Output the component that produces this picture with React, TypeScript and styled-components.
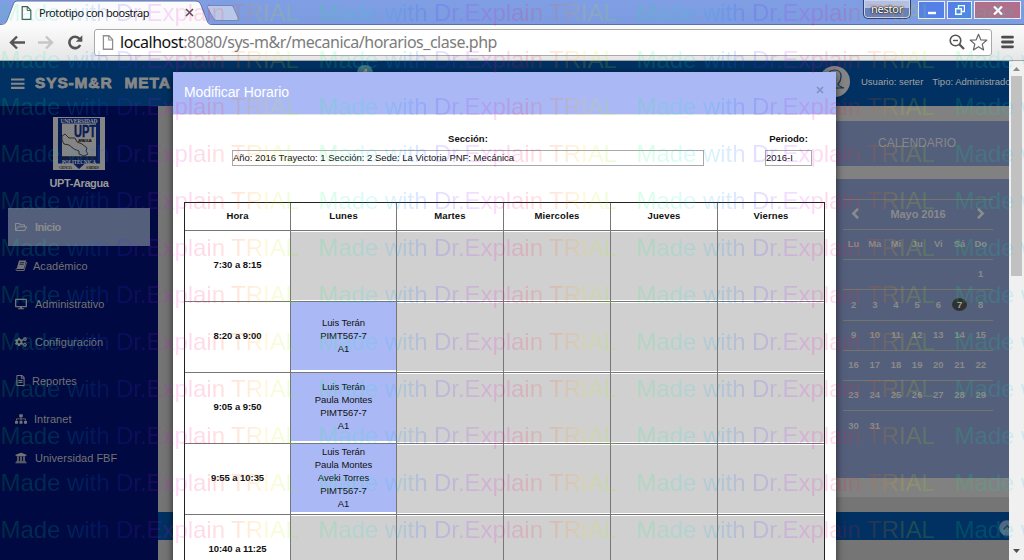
import React from "react";
import styled, { createGlobalStyle, css } from "styled-components";
import {
  FaRegFolderOpen,
  FaDesktop,
  FaCogs,
  FaRegFileAlt,
  FaSitemap,
  FaUniversity,
} from "react-icons/fa";

const Global = createGlobalStyle`
  * { box-sizing: border-box; }
  html, body { margin: 0; padding: 0; overflow: hidden; }
  body { font-family: "Liberation Sans", Arial, sans-serif; }
  svg { display: block; flex: none; }
`;

const Window = styled.div`
  position: relative;
  width: 1024px;
  height: 560px;
  display: flex;
  flex-direction: column;
  overflow: hidden;
`;

/* ---------- browser chrome ---------- */

const TabStrip = styled.header`
  height: 25px;
  flex: none;
  display: flex;
  align-items: flex-start;
  background: linear-gradient(#7f9ee3, #7d9be0);
  border-bottom: 1px solid #5b6fa8;
`;

const Tab = styled.div`
  position: relative;
  width: 212px;
  height: 25px;
  display: flex;
  align-items: center;
  padding-left: 21px;
`;

const TabShape = styled.svg`
  position: absolute;
  left: 0;
  top: 0;
`;

const TabTitle = styled.span`
  position: relative;
  margin-left: 7px;
  width: 146px;
  font: 11px/14px "Noto Sans", sans-serif;
  letter-spacing: -0.43px;
  color: #111;
  white-space: nowrap;
`;

const Raised = styled.svg`
  position: relative;
`;

const NewTab = styled.svg`
  margin: 5px 0 0 -6px;
`;

const WindowButtons = styled.div`
  margin-left: auto;
  display: flex;
  padding-right: 2px;
`;

const Profile = styled.div`
  width: 48px;
  height: 19px;
  margin-right: 6px;
  border: 1px solid #33416e;
  border-top: 0;
  border-radius: 0 0 5px 5px;
  box-shadow: inset 0 0 0 1px #c9d3ee;
  background: linear-gradient(#b3c0e2 0 8px, #6a80b9 8px 100%);
  color: #fff;
  font: 11px/18px "Noto Sans", sans-serif;
  letter-spacing: -0.2px;
  text-align: center;
  text-shadow: 0 0 2px #222, 0 0 2px #222, 0 0 1px #222;
`;

const WinButton = styled.div<{ $w: number; $tone: string }>`
  width: ${(p) => p.$w}px;
  height: 18px;
  margin: 1px 1px 0 1px;
  border: 1px solid #e9edf8;
  background: ${(p) => p.$tone};
  display: flex;
  align-items: center;
  justify-content: center;
`;

const Toolbar = styled.div`
  height: 36px;
  flex: none;
  display: flex;
  align-items: center;
  padding: 0 9px 1px 9px;
  background: linear-gradient(#fbfbfb, #e6e6e6);
  border-bottom: 1px solid #a5a5a5;
`;

const NavIcons = styled.div`
  display: flex;
  gap: 13px;
  width: 85px;
`;

const Omnibox = styled.div`
  width: 898px;
  height: 27px;
  display: flex;
  align-items: center;
  padding: 0 3px 0 7px;
  background: #fff;
  border: 1px solid #a9a9a9;
  border-radius: 3px;
`;

const Url = styled.div`
  flex: 1;
  margin-left: 6px;
  font: 16px/24px "Noto Sans", sans-serif;
  letter-spacing: -0.48px;
  color: #7c7c7c;
  white-space: nowrap;
  b {
    font-weight: 400;
    color: #111;
  }
`;

const Star = styled.svg`
  margin-left: 4px;
`;

const MenuIcon = styled.svg`
  margin-left: 9px;
`;

/* ---------- page ---------- */

const Viewport = styled.div`
  flex: 1;
  display: flex;
  min-height: 0;
  position: relative;
`;

const Page = styled.div`
  width: 1009px;
  display: flex;
  flex-direction: column;
  overflow: hidden;
`;

const PageHeader = styled.div`
  position: relative;
  height: 45px;
  flex: none;
  display: flex;
  align-items: center;
  padding-left: 11px;
  background: #003162;
  color: #878787;
`;

const Brand = styled.span`
  margin: -2px 0 0 10px;
  font-size: 15.5px;
  font-weight: 700;
  letter-spacing: 0.85px;
  word-spacing: 7px;
  -webkit-text-stroke: 0.8px #878787;
  white-space: nowrap;
`;

const Badge = styled.span`
  position: absolute;
  left: 357px;
  top: 4px;
  width: 16px;
  height: 16px;
  border-radius: 50%;
  background: #3f7480;
  color: #b09a90;
  font: 700 9px/15px "Liberation Sans", sans-serif;
  text-align: center;
`;

const Avatar = styled.svg`
  position: absolute;
  left: 819px;
  top: 5px;
`;

const UserInfo = styled.div`
  position: absolute;
  left: 861px;
  top: 14px;
  display: flex;
  gap: 9px;
  font-size: 9.5px;
  line-height: 13px;
  letter-spacing: 0;
  color: #a3a3a3;
  white-space: nowrap;
`;

const PageBody = styled.div`
  flex: 1;
  display: flex;
  min-height: 0;
`;

const Sidebar = styled.nav`
  width: 158px;
  flex: none;
  background: #000941;
  padding: 11px 8px 0;
`;

const Logo = styled.svg`
  margin: 0 auto;
`;

const SchoolName = styled.div`
  height: 38px;
  padding-top: 6px;
  font-size: 11px;
  line-height: 14px;
  font-weight: 700;
  letter-spacing: -0.4px;
  text-align: center;
  color: #999;
`;

const NavItem = styled.div<{ $active?: boolean; $shift?: number }>`
  height: 38.4px;
  width: 142px;
  display: flex;
  align-items: center;
  padding-left: 7px;
  font-size: 11px;
  letter-spacing: 0.02px;
  color: #737373;
  span {
    margin-left: ${(p) => 8 - (p.$shift || 0)}px;
    white-space: nowrap;
  }
  ${(p) =>
    p.$active &&
    css`
      background: #545f7c;
      color: #8c8c8c;
      font-weight: 700;
      letter-spacing: -0.5px;
    `}
`;

const Main = styled.main`
  flex: 1;
  display: flex;
  flex-direction: column;
  background: #757575;
`;

const RightColumn = styled.aside`
  height: 391px;
  width: 184px;
  align-self: flex-end;
  padding: 15px 0 0 10px;
  background: #818181;
`;

const PanelTitle = styled.div`
  height: 45px;
  background: #545f7c;
  color: #878787;
  font-size: 12px;
  line-height: 44px;
  letter-spacing: 0.02px;
  padding-left: 43px;
`;

const CalendarPanel = styled.div`
  margin-top: 13px;
  height: 299px;
  background: #545f7c;
  padding: 20px 16px 0 8px;
  color: #8a8a8a;
  font-weight: 700;
`;

const MonthBar = styled.div`
  height: 31px;
  border: 1px solid #74746f;
  border-width: 1px 0;
  display: flex;
  align-items: center;
  justify-content: space-between;
  padding: 0 8px 2px 8px;
  font-size: 11px;
  letter-spacing: -0.05px;
`;

const Week = styled.div<{ $tall?: boolean; $last?: boolean }>`
  height: ${(p) => (p.$tall ? 31 : 30)}px;
  padding-bottom: 2px;
  display: grid;
  grid-template-columns: repeat(7, 21.2px);
  align-items: center;
  text-align: center;
  font-size: 9.5px;
  border-bottom: ${(p) => (p.$last ? 0 : 1)}px solid #74746f;
`;

const Day = styled.span<{ $today?: boolean }>`
  ${(p) =>
    p.$today &&
    css`
      justify-self: center;
      width: 15px;
      height: 13px;
      line-height: 13px;
      border-radius: 50%;
      background: #303030;
      color: #a0a0a0;
    `}
`;

const FooterBar = styled.div`
  margin-top: 15px;
  height: 28px;
  background: #003162;
  display: flex;
  justify-content: flex-end;
  align-items: center;
`;

const UpButton = styled.svg`
  margin: 3px -6px 0 0;
`;

const Scrollbar = styled.div`
  width: 15px;
  background: #f0f0f0;
  display: flex;
  flex-direction: column;
  align-items: center;
  padding: 6px 0 7px 0;
`;

const Thumb = styled.div`
  width: 11px;
  height: 200px;
  margin: 5px 0 auto;
  background: #c1c1c1;
`;

/* ---------- modal ---------- */

const Modal = styled.section`
  position: absolute;
  left: 173px;
  top: 11px;
  width: 663px;
  height: 520px;
  background: #fff;
  box-shadow: 0 2px 8px rgba(0, 0, 0, 0.65);
  color: #111;
`;

const ModalHeader = styled.div`
  height: 43px;
  display: flex;
  align-items: center;
  justify-content: space-between;
  padding: 0 12px 3px 11px;
  background: #aab9f5;
  border-bottom: 1px solid #e5e5e5;
  color: #fff;
  font-size: 14px;
  letter-spacing: -0.1px;
`;

const CloseIcon = styled.svg`
  margin-bottom: 4px;
`;

const Fields = styled.div`
  display: flex;
  justify-content: space-between;
  padding: 17px 24px 0 59px;
  height: 87px;
`;

const Field = styled.label<{ $w: number }>`
  width: ${(p) => p.$w}px;
  display: flex;
  flex-direction: column;
  font-size: 9.5px;
  font-weight: 700;
  line-height: 13px;
  letter-spacing: 0.02px;
  text-align: center;
`;

const Input = styled.div`
  margin-top: 5px;
  height: 16px;
  border: 1px solid #a9a9a9;
  font-weight: 400;
  font-size: 9.5px;
  line-height: 13px;
  letter-spacing: -0.02px;
  text-align: left;
  white-space: nowrap;
`;

const Schedule = styled.div`
  width: 641px;
  margin-left: 11px;
  display: grid;
  grid-template-columns: 106px 106px 107px 107px 107px 106px;
  grid-template-rows: 28px repeat(5, 71px);
  border: 1px solid #222;
  font-size: 9.5px;
`;

const Cell = styled.div<{ $last?: boolean }>`
  border-right: ${(p) => (p.$last ? 0 : 1)}px solid #777;
  border-bottom: 1px solid #777;
  background: #fff;
  display: flex;
  align-items: center;
  justify-content: center;
`;

const HeadCell = styled(Cell)`
  font-weight: 700;
  letter-spacing: 0.12px;
  padding-bottom: 3px;
`;

const HourCell = styled(HeadCell)`
  padding-bottom: 4px;
  letter-spacing: -0.06px;
`;

const SlotCell = styled(Cell)`
  align-items: flex-start;
`;

const Slot = styled.div<{ $busy?: boolean }>`
  width: 100%;
  height: 68px;
  margin-top: ${(p) => (p.$busy ? 0 : 1)}px;
  padding-bottom: 2px;
  background: ${(p) => (p.$busy ? "#aab9f5" : "#d0d0d0")};
  display: flex;
  flex-direction: column;
  align-items: center;
  justify-content: center;
  line-height: 13px;
  letter-spacing: -0.05px;
`;

/* ---------- watermark ---------- */

const WatermarkLayer = styled.div`
  position: absolute;
  inset: -1px 0 0 0;
  display: grid;
  grid-template-columns: repeat(4, 318px);
  grid-auto-rows: 47px;
  overflow: hidden;
  pointer-events: none;
  opacity: 0.14;
`;

const Mark = styled.span`
  padding-left: 0.5px;
  font-size: 24px;
  line-height: 27px;
  letter-spacing: -0.05px;
  white-space: nowrap;
  color: transparent;
  background: linear-gradient(
    90deg,
    #00ff60 0px,
    #00e8d8 50px,
    #0090ff 85px,
    #3030ff 115px,
    #9020ff 145px,
    #f000f0 170px,
    #ff0050 205px,
    #ff6000 240px,
    #ffe000 268px,
    #80ff00 295px,
    #00ff60 318px
  );
  background-clip: text;
  -webkit-background-clip: text;
`;

const BarsIcon = () => (
  <svg width="14" height="12" viewBox="0 0 14 12">
    <path d="M0 1.500h13.500M0 5.700h13.500M0 9.900h13.500" stroke="#878787" strokeWidth="2.100" />
  </svg>
);

const BookIcon = () => (
  <svg width="12" height="11" viewBox="0 0 12 11">
    <path d="M4 .5h7.2L8.800 9H1.600z" fill="currentColor" />
    <path d="M1.600 8.600 1 9.600c0 .6.4.9.9.9h7.200L11.600 2" fill="none" stroke="currentColor" strokeWidth=".9" />
    <path d="M5 2.600h4.200M4.500 4.300h4.200" stroke="#000941" strokeWidth=".7" />
  </svg>
);

const Chevron = ({ d }: { d: string }) => (
  <svg width="8" height="11" viewBox="0 0 8 11">
    <path d={d} fill="none" stroke="#8c8c8c" strokeWidth="2.500" />
  </svg>
);

const PageIcon = ({ w, h, c }: { w: number; h: number; c: string }) => (
  <Raised width={w} height={h} viewBox="0 0 10 14">
    <path d="M.7.7h5.200l3.400 3.600v9H.7z" fill="#fff" stroke={c} strokeWidth="1.200" />
    <path d="M5.700.9v3.700h3.500" fill="none" stroke={c} strokeWidth="1" />
  </Raised>
);

const SchoolLogo = () => (
  <Logo width="52" height="53" viewBox="0 0 52 53">
    <rect width="52" height="53" fill="#858585" />
    <path d="M5 1h42v45.500H32L26 52l-6-5.500H5z" fill="#0a1c55" />
    <path d="M9 6.500h34v33H9z" fill="#858585" />
    <g fontFamily="Liberation Serif" fontWeight="700" fill="#999">
      <text x="7.500" y="5.600" fontSize="5.500" textLength="37">UNIVERSIDAD</text>
      <text x="9" y="47" fontSize="6" textLength="34" lengthAdjust="spacingAndGlyphs">POLITÉCNICA</text>
    </g>
    <text x="21" y="19.500" fontFamily="Liberation Sans" fontWeight="700" fontSize="16" fill="#0a1c55" stroke="#0a1c55" strokeWidth=".5" textLength="22" lengthAdjust="spacingAndGlyphs">UPT</text>
    <text x="25" y="24.500" fontFamily="Liberation Sans" fontWeight="700" fontSize="4" fill="#111" textLength="14">ARAGUA</text>
    <path d="M9 19l3-2 2 2 2 2 6 0 2 4 5 2 5 4-1 3 2 3-4 2-5-2 0-3-5-2-5-4-5-1-2-4z" fill="none" stroke="#222" strokeWidth=".9" />
    <path d="M9 40.500h34" stroke="#1c1c24" strokeWidth="2.400" strokeDasharray="1.600 .5" />
    <g fontFamily="Liberation Serif" fontWeight="700" fontSize="3.500" fill="#222">
      <text x="6" y="52" textLength="13">CIENCIA</text>
      <text x="33" y="52" textLength="13">SABERES</text>
    </g>
  </Logo>
);

const weeks: string[][] = [
  ["", "", "", "", "", "", "1"],
  ["2", "3", "4", "5", "6", "7", "8"],
  ["9", "10", "11", "12", "13", "14", "15"],
  ["16", "17", "18", "19", "20", "21", "22"],
  ["23", "24", "25", "26", "27", "28", "29"],
  ["30", "31", "", "", "", "", ""],
];

const days = ["Hora", "Lunes", "Martes", "Miercoles", "Jueves", "Viernes"];

const hours: { time: string; monday?: string[] }[] = [
  { time: "7:30 a 8:15" },
  { time: "8:20 a 9:00", monday: ["Luis Terán", "PIMT567-7", "A1"] },
  { time: "9:05 a 9:50", monday: ["Luis Terán", "Paula Montes", "PIMT567-7", "A1"] },
  { time: "9:55 a 10:35", monday: ["Luis Terán", "Paula Montes", "Aveki Torres", "PIMT567-7", "A1"] },
  { time: "10:40 a 11:25" },
];

const Chrome = () => (
  <>
    <TabStrip>
      <Tab>
        <TabShape width="212" height="25" viewBox="0 0 212 25">
          <path d="M0 25v-1c4 0 6-1 7-4l6-15c1-3 2-4 5-4h177c3 0 5 1 6 4l6 15c1 3 2 4 5 4v1z" fill="#fbfbfb" />
          <path d="M0 24.500c4 0 6-1 7-4l6-15.500c1-3 2-4 5-4h177c3 0 5 1 6 4l6 15.500c1 3 2 4 5 4" fill="none" stroke="#5b6fa8" />
        </TabShape>
        <PageIcon w={11} h={14} c="#4b5a50" />
        <TabTitle>Prototipo con boostrap</TabTitle>
        <Raised width="9" height="9" viewBox="0 0 9 9">
          <path d="M1 1l7 7M8 1L1 8" stroke="#555" strokeWidth="1.600" />
        </Raised>
      </Tab>
      <NewTab width="34" height="16" viewBox="0 0 34 16">
        <path d="M3 .5h21c2 0 3 .5 4 3l4 9c.6 2 0 3-2 3H11c-2 0-3-1-4-3L1.500 3C1 1.500 1.500.5 3 .5z" fill="#b9c8e9" stroke="#7587b8" />
      </NewTab>
      <WindowButtons>
        <Profile>nestor</Profile>
        <WinButton $w={27} $tone="#5580e8">
          <svg width="10" height="10"><path d="M1 8h8" stroke="#fff" strokeWidth="2.400" /></svg>
        </WinButton>
        <WinButton $w={25} $tone="#5580e8">
          <svg width="10" height="10" fill="none" stroke="#fff">
            <path d="M3.500 3V.5h6v6H7" strokeWidth="1.300" />
            <path d="M.7 3.700h5.600v5.600H.7z" strokeWidth="1.400" />
          </svg>
        </WinButton>
        <WinButton $w={47} $tone="#b0708c">
          <svg width="10" height="9"><path d="M1 .5l8 8M9 .5l-8 8" stroke="#fff" strokeWidth="2.200" /></svg>
        </WinButton>
      </WindowButtons>
    </TabStrip>
    <Toolbar>
      <NavIcons>
        <svg width="16" height="15" viewBox="0 0 16 15" fill="none" stroke="#555" strokeWidth="2.400">
          <path d="M1.500 7.500H16M8 1.500l-6 6 6 6" />
        </svg>
        <svg width="16" height="15" viewBox="0 0 16 15" fill="none" stroke="#c6c6c6" strokeWidth="2.400">
          <path d="M0 7.500h14.500M8 1.500l6 6-6 6" />
        </svg>
        <svg width="16" height="15" viewBox="0 0 16 15">
          <path d="M12.500 3.800A5.700 5.700 0 1 0 13.200 10" fill="none" stroke="#555" strokeWidth="2.600" />
          <path d="M15.300.3v6.500H8.800z" fill="#555" />
        </svg>
      </NavIcons>
      <Omnibox>
        <PageIcon w={12} h={15} c="#8f8f8f" />
        <Url><b>localhost</b>:8080/sys-m&amp;r/mecanica/horarios_clase.php</Url>
        <svg width="16" height="16" viewBox="0 0 16 16" fill="none" stroke="#555">
          <circle cx="6.500" cy="6.500" r="5.300" strokeWidth="1.600" />
          <path d="M4 6.500h5" strokeWidth="1.400" />
          <path d="M10.500 10.500l4.500 4.500" strokeWidth="2.300" />
        </svg>
        <Star width="19" height="18" viewBox="0 0 19 18">
          <path d="M9.500 1.300l2.300 5.500 5.900.4-4.500 3.900 1.400 5.800-5.100-3.200-5.100 3.200 1.400-5.800L1.300 7.200l5.900-.4z" fill="#fff" stroke="#666" strokeWidth="1.200" strokeLinejoin="round" />
        </Star>
      </Omnibox>
      <MenuIcon width="13" height="14" viewBox="0 0 13 14">
        <path d="M1.500 2.200h10M1.500 7h10M1.500 11.800h10" stroke="#4c4c4c" strokeWidth="2.800" strokeLinecap="round" />
      </MenuIcon>
    </Toolbar>
  </>
);

const CalendarCard = () => (
  <CalendarPanel>
    <MonthBar>
      <Chevron d="M7 .8L2.300 5.500 7 10.200" />
      <span>Mayo 2016</span>
      <Chevron d="M1 .8l4.700 4.700L1 10.200" />
    </MonthBar>
    <Week>
      {["Lu", "Ma", "Mi", "Ju", "Vi", "Sá", "Do"].map((d) => (
        <Day key={d}>{d}</Day>
      ))}
    </Week>
    {weeks.map((w, i) => (
      <Week key={i} $tall={i === 1} $last={i === 5}>
        {w.map((d, j) => (
          <Day key={j} $today={d === "7"}>{d}</Day>
        ))}
      </Week>
    ))}
  </CalendarPanel>
);

const ScheduleTable = () => (
  <Schedule>
    {days.map((d, i) => (
      <HeadCell key={d} $last={i === 5}>{d}</HeadCell>
    ))}
    {hours.map((h) => (
      <React.Fragment key={h.time}>
        <HourCell>{h.time}</HourCell>
        <SlotCell>
          <Slot $busy={!!h.monday}>
            {h.monday?.map((t) => <span key={t}>{t}</span>)}
          </Slot>
        </SlotCell>
        {[0, 1, 2, 3].map((n) => (
          <SlotCell key={n} $last={n === 3}>
            <Slot />
          </SlotCell>
        ))}
      </React.Fragment>
    ))}
  </Schedule>
);

export default function App() {
  return (
    <Window>
      <Global />
      <Chrome />
      <Viewport>
        <Page>
          <PageHeader>
            <BarsIcon />
            <Brand>SYS-M&amp;R META</Brand>
            <Badge>4</Badge>
            <Avatar width="31" height="31" viewBox="0 0 31 31">
              <circle cx="15.500" cy="15.500" r="15.500" fill="#858585" />
              <path d="M6 22c3-1.500 6-1.500 6-4-2-3-3-5-3-8 0-4 3-6 7-6s6 3 6 6-1 6-3 8c0 2 3 3 6 4H6z" fill="#858585" stroke="#12385f" strokeWidth="1.200" />
            </Avatar>
            <UserInfo>
              <span>Usuario: serter</span>
              <span>Tipo: Administrador</span>
            </UserInfo>
          </PageHeader>
          <PageBody>
            <Sidebar>
              <SchoolLogo />
              <SchoolName>UPT-Aragua</SchoolName>
              <NavItem $active><FaRegFolderOpen size={12} /><span>Inicio</span></NavItem>
              <NavItem $shift={2}><BookIcon /><span>Académico</span></NavItem>
              <NavItem><FaDesktop size={12} /><span>Administrativo</span></NavItem>
              <NavItem><FaCogs size={12} /><span>Configuración</span></NavItem>
              <NavItem $shift={2}><FaRegFileAlt size={11} /><span>Reportes</span></NavItem>
              <NavItem $shift={1}><FaSitemap size={12} /><span>Intranet</span></NavItem>
              <NavItem><FaUniversity size={12} /><span>Universidad FBF</span></NavItem>
            </Sidebar>
            <Main>
              <RightColumn>
                <PanelTitle>CALENDARIO</PanelTitle>
                <CalendarCard />
              </RightColumn>
              <FooterBar>
                <UpButton width="16" height="16" viewBox="0 0 16 16">
                  <circle cx="8" cy="8" r="7.800" fill="#53687f" />
                  <path d="M4.500 9.500L8 5.500l3.500 4" fill="none" stroke="#1c3350" strokeWidth="1.300" />
                </UpButton>
              </FooterBar>
            </Main>
          </PageBody>
        </Page>
        <Scrollbar>
          <svg width="7" height="4"><path d="M0 4l3.500-4L7 4z" fill="#8b8b8b" /></svg>
          <Thumb />
          <svg width="7" height="4"><path d="M0 0h7L3.500 4z" fill="#505050" /></svg>
        </Scrollbar>
        <Modal>
          <ModalHeader>
            <span>Modificar Horario</span>
            <CloseIcon width="8" height="8"><path d="M1 1l6 6M7 1L1 7" stroke="#8491c0" strokeWidth="1.700" /></CloseIcon>
          </ModalHeader>
          <Fields>
            <Field $w={472}>
              Sección:
              <Input>Año: 2016 Trayecto: 1 Sección: 2 Sede: La Victoria PNF: Mecánica</Input>
            </Field>
            <Field $w={47}>
              Periodo:
              <Input>2016-I</Input>
            </Field>
          </Fields>
          <ScheduleTable />
        </Modal>
      </Viewport>
      <WatermarkLayer>
        {Array.from({ length: 48 }, (_, i) => (
          <Mark key={i}>Made with Dr.Explain TRIAL</Mark>
        ))}
      </WatermarkLayer>
    </Window>
  );
}
